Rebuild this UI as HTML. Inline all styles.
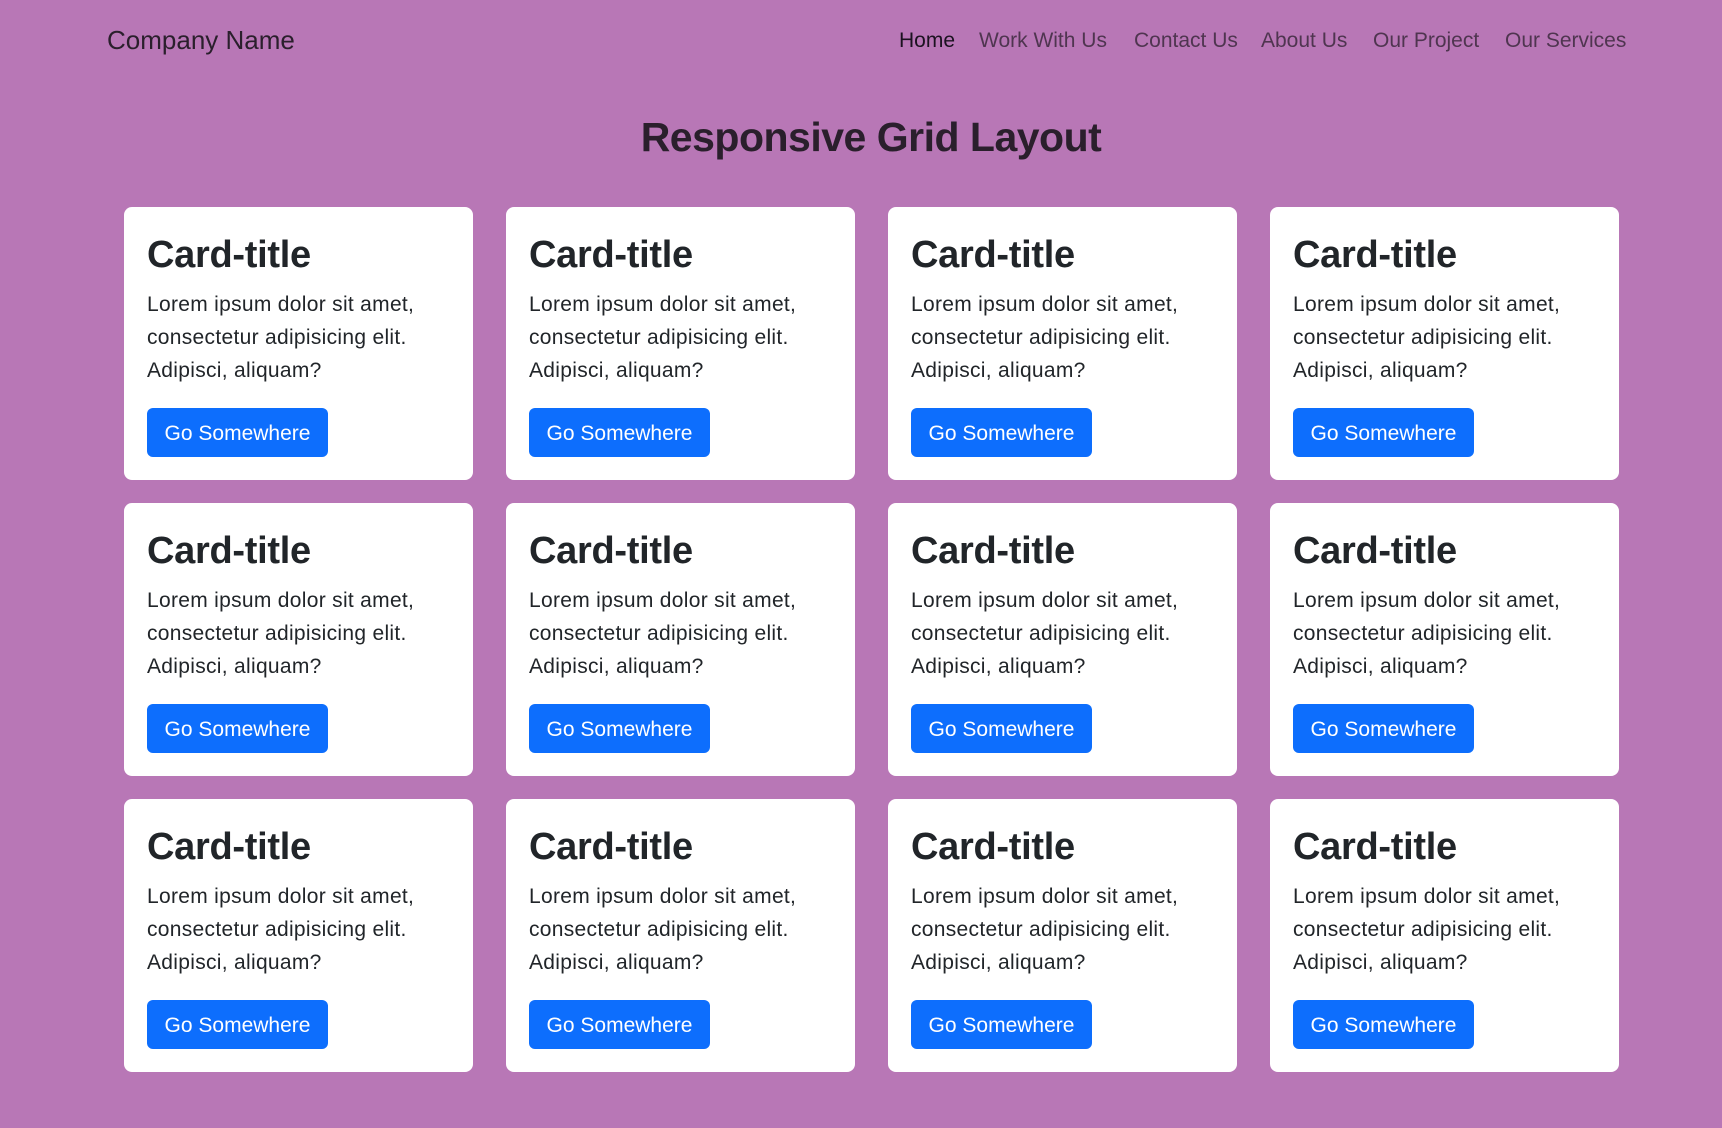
<!DOCTYPE html>
<html><head><meta charset="utf-8"><style>
*{margin:0;padding:0;box-sizing:border-box}
body{width:1722px;height:1128px;background:#b877b6;font-family:"Liberation Sans",sans-serif;color:#212529;position:relative;overflow:hidden}
.brand{position:absolute;left:107px;top:25px;font-size:26px;color:#2a1f2c}
.nav a{position:absolute;top:29px;font-size:21px;color:#4f3550;text-decoration:none;white-space:nowrap}
.nav a.active{color:#1b1220}
h1{position:absolute;left:0;width:1742px;text-align:center;top:114px;font-size:41px;font-weight:bold;color:#2a1f2c;letter-spacing:-0.5px}
.card{position:absolute;width:349px;height:273px;background:#fff;border-radius:8px}
.card h2{position:absolute;left:23px;top:27px;font-size:38px;font-weight:bold;letter-spacing:-0.3px}
.card p{position:absolute;left:23px;top:81px;width:330px;font-size:21px;line-height:33px;letter-spacing:0.3px;white-space:nowrap}
.card .btn{position:absolute;left:23px;top:201px;width:181px;height:49px;background:#0d6efd;border-radius:6px;color:#fff;font-size:21px;line-height:51px;text-align:center}
</style></head><body>
<div class="brand">Company Name</div>
<div class="nav">
<a class="active" style="left:899px">Home</a>
<a style="left:979px">Work With Us</a>
<a style="left:1134px">Contact Us</a>
<a style="left:1261px">About Us</a>
<a style="left:1373px">Our Project</a>
<a style="left:1505px">Our Services</a>
</div>
<h1>Responsive Grid Layout</h1>
<div class="card" style="left:124px;top:207px"><h2>Card-title</h2><p>Lorem ipsum dolor sit amet,<br>consectetur adipisicing elit.<br>Adipisci, aliquam?</p><div class="btn">Go Somewhere</div></div>
<div class="card" style="left:506px;top:207px"><h2>Card-title</h2><p>Lorem ipsum dolor sit amet,<br>consectetur adipisicing elit.<br>Adipisci, aliquam?</p><div class="btn">Go Somewhere</div></div>
<div class="card" style="left:888px;top:207px"><h2>Card-title</h2><p>Lorem ipsum dolor sit amet,<br>consectetur adipisicing elit.<br>Adipisci, aliquam?</p><div class="btn">Go Somewhere</div></div>
<div class="card" style="left:1270px;top:207px"><h2>Card-title</h2><p>Lorem ipsum dolor sit amet,<br>consectetur adipisicing elit.<br>Adipisci, aliquam?</p><div class="btn">Go Somewhere</div></div>
<div class="card" style="left:124px;top:503px"><h2>Card-title</h2><p>Lorem ipsum dolor sit amet,<br>consectetur adipisicing elit.<br>Adipisci, aliquam?</p><div class="btn">Go Somewhere</div></div>
<div class="card" style="left:506px;top:503px"><h2>Card-title</h2><p>Lorem ipsum dolor sit amet,<br>consectetur adipisicing elit.<br>Adipisci, aliquam?</p><div class="btn">Go Somewhere</div></div>
<div class="card" style="left:888px;top:503px"><h2>Card-title</h2><p>Lorem ipsum dolor sit amet,<br>consectetur adipisicing elit.<br>Adipisci, aliquam?</p><div class="btn">Go Somewhere</div></div>
<div class="card" style="left:1270px;top:503px"><h2>Card-title</h2><p>Lorem ipsum dolor sit amet,<br>consectetur adipisicing elit.<br>Adipisci, aliquam?</p><div class="btn">Go Somewhere</div></div>
<div class="card" style="left:124px;top:799px"><h2>Card-title</h2><p>Lorem ipsum dolor sit amet,<br>consectetur adipisicing elit.<br>Adipisci, aliquam?</p><div class="btn">Go Somewhere</div></div>
<div class="card" style="left:506px;top:799px"><h2>Card-title</h2><p>Lorem ipsum dolor sit amet,<br>consectetur adipisicing elit.<br>Adipisci, aliquam?</p><div class="btn">Go Somewhere</div></div>
<div class="card" style="left:888px;top:799px"><h2>Card-title</h2><p>Lorem ipsum dolor sit amet,<br>consectetur adipisicing elit.<br>Adipisci, aliquam?</p><div class="btn">Go Somewhere</div></div>
<div class="card" style="left:1270px;top:799px"><h2>Card-title</h2><p>Lorem ipsum dolor sit amet,<br>consectetur adipisicing elit.<br>Adipisci, aliquam?</p><div class="btn">Go Somewhere</div></div>
</body></html>
